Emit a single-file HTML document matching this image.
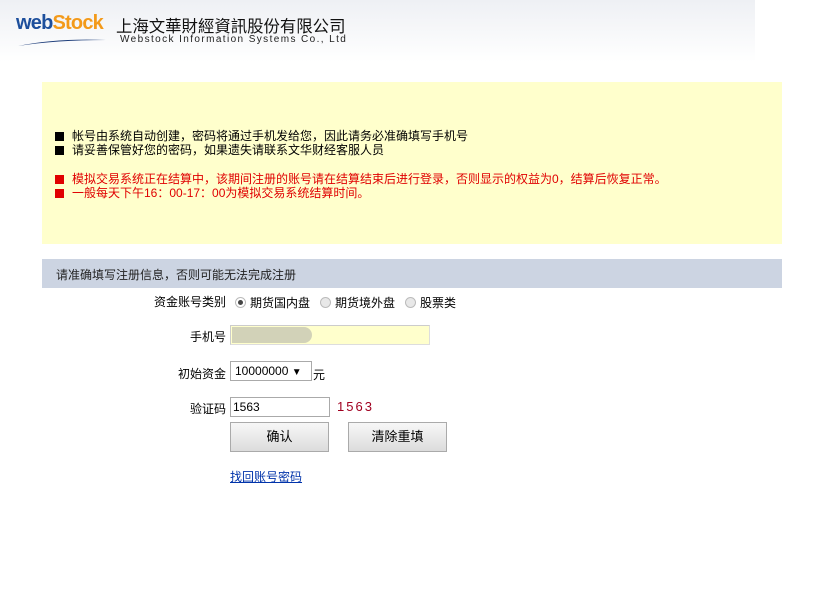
<!DOCTYPE html>
<html><head><meta charset="utf-8"><style>
body{margin:0;width:833px;height:616px;background:#fff;font-family:"Liberation Sans","Noto Sans CJK SC",sans-serif;font-size:12px;color:#000;position:relative;overflow:hidden}
.top{position:absolute;left:0;top:0;width:755px;height:62px;background:linear-gradient(#eef0f4,#fff)}
.a{position:absolute;white-space:nowrap}
.yb{position:absolute;left:42px;top:82px;width:740px;height:162px;background:#ffffcc}
.sq{display:inline-block;width:9px;height:9px;margin-right:8px;vertical-align:-1px}
.bar{position:absolute;left:42px;top:259px;width:740px;height:29px;background:#ccd4e2}
.inp{position:absolute;border:1px solid #aaa;background:#fff;height:19px;box-sizing:border-box}
.btn{position:absolute;width:99px;height:30px;border:1px solid #aaa;background:linear-gradient(#f7f7f7,#dcdcdc);box-sizing:border-box;text-align:center;line-height:28px;font-size:13px}
.r{display:inline-block;width:11px;height:11px;border-radius:50%;border:1px solid #bbb;background:#e8e8e8;box-sizing:border-box;vertical-align:-1px;margin-right:4px;position:relative}
</style></head><body>
<div class="top"></div>
<div class="a" style="left:16px;top:12px;font-size:20px;font-weight:bold;letter-spacing:-0.8px"><span style="color:#1d4f9c">web</span><span style="color:#f39a1a">Stock</span></div>
<svg class="a" style="left:16px;top:36px" width="92" height="12"><path d="M2 10 Q40 2 90 4 Q40 4 2 10Z" fill="#1d3d7a"/></svg>
<div class="a" style="left:116px;top:13px;font-size:16.4px;color:#111">上海文華財經資訊股份有限公司</div>
<div class="a" style="left:120px;top:34px;font-size:10px;letter-spacing:1.4px;color:#222">Webstock Information Systems Co., Ltd</div>
<div class="yb"></div>
<div class="a" style="left:55px;top:127px"><span class="sq" style="background:#000"></span>帐号由系统自动创建，密码将通过手机发给您，因此请务必准确填写手机号</div>
<div class="a" style="left:55px;top:141px"><span class="sq" style="background:#000"></span>请妥善保管好您的密码，如果遗失请联系文华财经客服人员</div>
<div class="a" style="left:55px;top:170px;color:#e00000"><span class="sq" style="background:#e00000"></span>模拟交易系统正在结算中，该期间注册的账号请在结算结束后进行登录，否则显示的权益为0，结算后恢复正常。</div>
<div class="a" style="left:55px;top:184px;color:#e00000"><span class="sq" style="background:#e00000"></span>一般每天下午16：00-17：00为模拟交易系统结算时间。</div>
<div class="bar"></div>
<div class="a" style="left:56px;top:266px;color:#222">请准确填写注册信息，否则可能无法完成注册</div>
<div class="a" style="left:154px;top:293px">资金账号类别</div>
<div class="a" style="left:235px;top:294px"><span class="r" style="background:#fff"><span style="position:absolute;left:2px;top:2px;width:5px;height:5px;border-radius:50%;background:#444"></span></span>期货国内盘&nbsp;&nbsp;&nbsp;<span class="r"></span>期货境外盘&nbsp;&nbsp;&nbsp;<span class="r"></span>股票类</div>
<div class="a" style="left:190px;top:328px">手机号</div>
<div class="inp" style="left:230px;top:325px;width:200px;height:20px;background:#ffffcc;border-color:#ccc #ddd #ddd #ccc"></div>
<div class="a" style="left:232px;top:327px;width:80px;height:16px;background:#d2d2b8;border-radius:0 8px 8px 0"></div>
<div class="a" style="left:178px;top:365px">初始资金</div>
<div class="inp" style="left:230px;top:361px;width:82px;height:20px;padding-left:4px;line-height:18px">10000000 <span style="font-size:10px">▼</span></div>
<div class="a" style="left:313px;top:366px">元</div>
<div class="a" style="left:190px;top:400px">验证码</div>
<div class="inp" style="left:230px;top:397px;width:100px;height:20px;padding-left:2px;line-height:18px">1563</div>
<div class="a" style="left:337px;top:399px;color:#a00020;font-size:13px;letter-spacing:2px">1563</div>
<div class="btn" style="left:230px;top:422px">确认</div>
<div class="btn" style="left:348px;top:422px">清除重填</div>
<div class="a" style="left:230px;top:468px;color:#0033aa;text-decoration:underline">找回账号密码</div>
</body></html>
